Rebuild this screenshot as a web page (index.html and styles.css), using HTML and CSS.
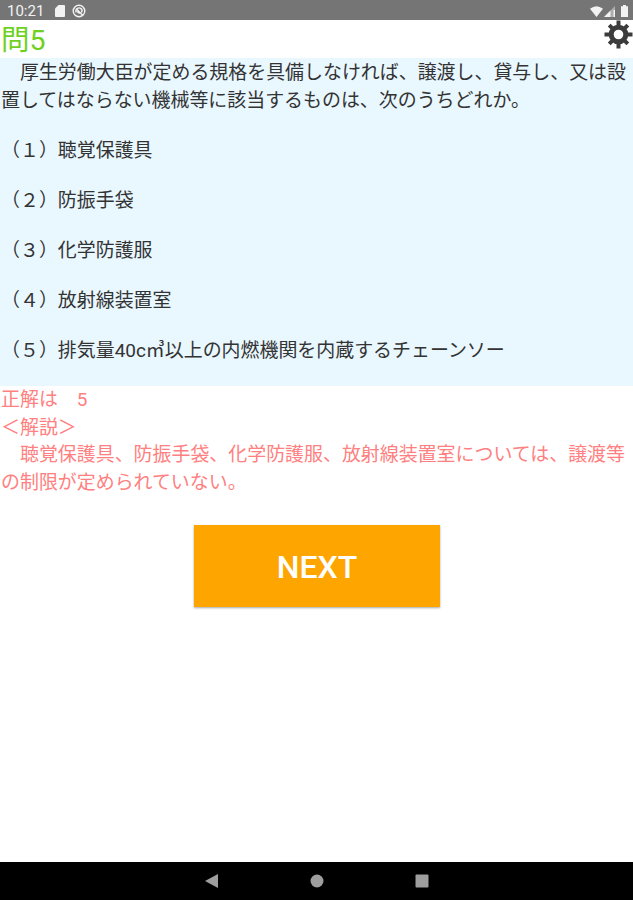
FILE: index.html
```html
<!DOCTYPE html>
<html lang="ja">
<head>
  <meta charset="utf-8">
  <title>問5</title>
  <meta name="viewport" content="width=device-width, initial-scale=1.0">
  <link rel="stylesheet" href="styles.css">
</head>
<body>
  <div class="status-bar">
    <span class="clock">10:21</span>
    <svg class="sd-icon" width="10" height="12" viewBox="0 0 10 12"><path d="M3.5 0H9a1 1 0 0 1 1 1v10a1 1 0 0 1-1 1H1a1 1 0 0 1-1-1V3.5z"/></svg>
    <svg class="sync-icon" width="14" height="14" viewBox="0 0 14 14"><circle cx="7" cy="7" r="5.8"/><path d="M4 4.5l7 7M4.2 8.5A3.2 3.2 0 0 1 9 4.6c1.2 1 1.2 2.7.3 3.8M5.8 7.2a1.4 1.4 0 0 0 2 1.6"/></svg>
    <div class="status-right">
      <svg width="13" height="11" viewBox="0 0 13 11"><path d="M0 2.8Q6.500-2.300 13 2.800L6.500 11z"/></svg>
      <svg width="11" height="11" viewBox="0 0 11 11"><path d="M11 0v11H0z" opacity=".45"/><path d="M6.500 4.500V11H0zM9.500 4H11v7H9.500z"/></svg>
      <svg class="battery" width="7" height="12" viewBox="0 0 7 12"><path d="M2 0h3v1.200h2V12H0V1.200h2z"/></svg>
    </div>
  </div>
  <div class="header">
    <h1>問5</h1>
    <svg class="gear" width="29" height="29" viewBox="-14.5 -14.5 29 29">
      <g class="teeth">
        <path d="M0-14V-8M0 14V8M-14 0H-8M14 0H8M-9.300-9.300l3 3M9.300 9.300l-3-3M9.300-9.300l-3 3M-9.300 9.300l3-3"/>
      </g>
      <circle class="ring" r="7.300"/>
    </svg>
  </div>
  <div class="question">
    <p>　厚生労働大臣が定める規格を具備しなければ、譲渡し、貸与し、又は設置してはならない機械等に該当するものは、次のうちどれか。</p>
    <p>（１）聴覚保護具</p>
    <p>（２）防振手袋</p>
    <p>（３）化学防護服</p>
    <p>（４）放射線装置室</p>
    <p>（５）排気量40c㎥以上の内燃機関を内蔵するチェーンソー</p>
  </div>
  <div class="answer">
    正解は　5<br>
    ＜解説＞<br>
    　聴覚保護具、防振手袋、化学防護服、放射線装置室については、譲渡等の制限が定められていない。
  </div>
  <button class="next">NEXT</button>
  <div class="nav-bar">
    <svg width="14" height="14" viewBox="0 0 14 14"><path d="M13 0v14L0 7z"/></svg>
    <svg width="14" height="14" viewBox="0 0 14 14"><circle cx="7" cy="7" r="6.500"/></svg>
    <svg width="14" height="14" viewBox="0 0 14 14"><rect x=".5" y=".5" width="13" height="13" rx="1"/></svg>
  </div>
</body>
</html>
```
FILE: styles.css
```css
* {
  box-sizing: border-box;
}
body {
  margin: 0;
  height: 100vh;
  display: flex;
  flex-direction: column;
  background: white;
  font-family: Roboto, "Noto Sans CJK JP", sans-serif;
  font-size: 18.96px;
  line-height: 27.7px;
  overflow: hidden;
}
.status-bar {
  display: flex;
  align-items: center;
  height: 20px;
  padding: 2px 5px 0 7px;
  background: #757575;
  color: #f2f2f2;
  font-size: 15px;
  line-height: 18px;
}
.status-bar svg {
  fill: #f2f2f2;
}
.clock {
  width: 48px;
}
.status-bar .sync-icon {
  margin-left: 7px;
  fill: none;
  stroke: #f2f2f2;
  stroke-width: 1.4;
}
.status-right {
  display: flex;
  align-items: center;
  gap: 1px;
  margin-left: auto;
}
.battery {
  margin-left: 5px;
}
.header {
  display: flex;
  justify-content: space-between;
  height: 38px;
}
.header h1 {
  margin: 0;
  padding-left: 1px;
  color: #6fd01f;
  font-size: 28.5px;
  font-weight: 400;
  line-height: 42px;
}
.gear {
  fill: none;
  stroke: #3c3c3c;
}
.teeth {
  stroke-width: 4;
}
.ring {
  stroke-width: 5;
}
.question {
  height: 328px;
  padding: 1px 0 0 1px;
  background: #e9f7ff;
  color: #333;
}
.question p {
  margin: 0 0 22.3px;
}
.answer {
  padding-left: 1px;
  color: #ff8080;
}
.next {
  align-self: center;
  width: 246px;
  height: 82px;
  margin-top: 28.5px;
  padding: 1px 0 0 1px;
  border: 0;
  background: #ffa500;
  box-shadow: 0 1px 2px rgba(0, 0, 0, 0.35);
  color: white;
  font-family: Roboto, sans-serif;
  font-size: 32px;
  font-weight: 500;
}
.nav-bar {
  display: flex;
  justify-content: center;
  align-items: center;
  gap: 91px;
  height: 38px;
  margin-top: auto;
  background: black;
}
.nav-bar svg {
  fill: #9e9e9e;
}
```
